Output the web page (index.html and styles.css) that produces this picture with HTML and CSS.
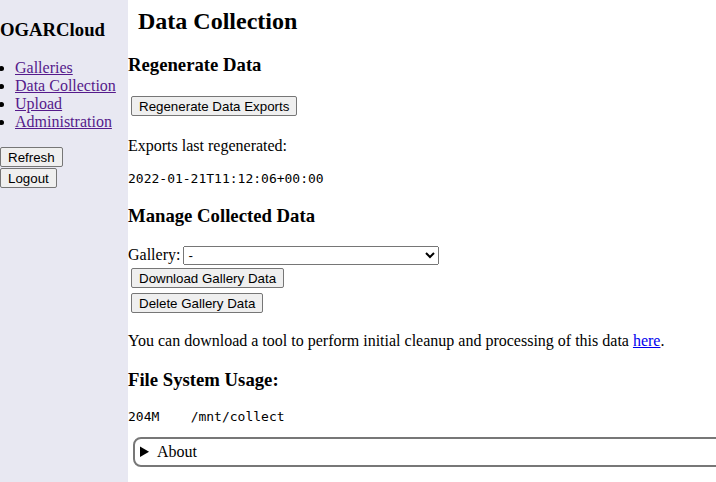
FILE: index.html
```html
<!DOCTYPE html>
<html lang="en">
<head>
<meta charset="utf-8">
<title>OGARCloud - Data Collection</title>
<link rel="stylesheet" href="styles.css">
</head>
<body>
<div class="layout">
  <nav class="sidebar">
    <h3 class="brand">OGARCloud</h3>
    <ul class="nav">
      <li><a class="nav-link" href="#">Galleries</a></li>
      <li><a class="nav-link" href="#">Data Collection</a></li>
      <li><a class="nav-link" href="#">Upload</a></li>
      <li><a class="nav-link" href="#">Administration</a></li>
    </ul>
    <div class="side-actions">
      <button class="btn" type="button">Refresh</button>
      <button class="btn" type="button">Logout</button>
    </div>
  </nav>
  <main class="content">
    <h2 class="title">Data Collection</h2>
    <h3 class="section">Regenerate Data</h3>
    <button class="btn btn-spaced btn-regen" type="button">Regenerate Data Exports</button>
    <p class="text">Exports last regenerated:</p>
    <pre class="mono">2022-01-21T11:12:06+00:00</pre>
    <h3 class="section">Manage Collected Data</h3>
    <div class="gallery-row">
      <label class="label">Gallery:</label>
      <select class="select"><option>-</option></select>
    </div>
    <div class="stack">
      <button class="btn btn-spaced" type="button">Download Gallery Data</button>
      <button class="btn btn-spaced" type="button">Delete Gallery Data</button>
    </div>
    <p class="text">You can download a tool to perform initial cleanup and processing of this data <a class="link" href="#">here</a>.</p>
    <h3 class="section">File System Usage:</h3>
    <pre class="mono">204M	/mnt/collect</pre>
    <details class="about">
      <summary class="about-summary">About</summary>
    </details>
  </main>
</div>
</body>
</html>
```
FILE: styles.css
```css
html, body {
  margin: 0;
  padding: 0;
  background: #ffffff;
}
body {
  font-family: "Liberation Serif", "Times New Roman", serif;
  font-size: 16px;
  color: #000;
}
.layout {
  display: flex;
  min-height: 482px;
  align-items: stretch;
}
.sidebar {
  flex: 0 0 128px;
  width: 128px;
  background: #e8e8f2;
}
.brand {
  font-size: 18.72px;
  font-weight: bold;
  margin: 18.72px 0;
}
.nav {
  margin: 16px 0;
  padding-left: 15px;
}
.nav-link {
  color: #551a8b;
}
.side-actions {
  display: flex;
  flex-direction: column;
  align-items: flex-start;
  gap: 1px;
}
.btn {
  font-family: "Liberation Sans", Arial, sans-serif;
  font-size: 13.333px;
  line-height: 15px;
  color: #000;
  background: #efefef;
  border: 1px solid #767676;
  border-radius: 2px;
  padding: 2px 7px 1px;
  margin: 0;
}
.btn-spaced {
  margin: 2px 2px 3px 3px;
}
.btn-regen {
  margin-bottom: 5px;
}
.content {
  flex: 1 1 auto;
  min-width: 0;
}
.title {
  font-size: 24px;
  font-weight: bold;
  margin: 8px 0 2px 10px;
}
.section {
  font-size: 18.72px;
  font-weight: bold;
  margin: 18.72px 0;
}
.text {
  margin: 16px 0;
}
.mono {
  font-family: "DejaVu Sans Mono", monospace;
  font-size: 13px;
  margin: 13px 0;
  tab-size: 8;
}
.gallery-row {
  display: flex;
  align-items: center;
}
.select {
  font-family: "Liberation Sans", Arial, sans-serif;
  font-size: 13.333px;
  width: 256px;
  height: 19px;
  margin-left: 3px;
}
.stack {
  display: flex;
  flex-direction: column;
  align-items: flex-start;
  padding-top: 1px;
}
.link {
  color: #0000ee;
}
.about {
  width: 100%;
  margin: 1px 0 0 5px;
  border: 2px solid #777;
  border-radius: 8px;
  padding: 4px 5px;
}
.about-summary {
  cursor: pointer;
}
```
